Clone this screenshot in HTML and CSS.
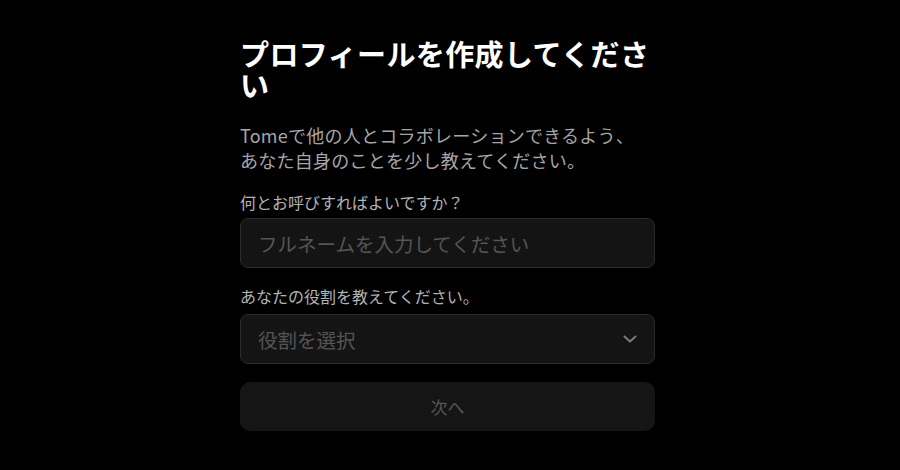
FILE: index.html
```html
<!DOCTYPE html>
<html lang="ja">
<head>
<meta charset="utf-8">
<title>プロフィールを作成してください</title>
<link rel="stylesheet" href="styles.css">
</head>
<body>
<main class="page">
  <form class="card">
    <h1 class="title">プロフィールを作成してください</h1>
    <p class="lead">Tomeで他の人とコラボレーションできるよう、<br>あなた自身のことを少し教えてください。</p>
    <div class="field">
      <label class="label" for="name">何とお呼びすればよいですか？</label>
      <input class="input" id="name" type="text" placeholder="フルネームを入力してください">
    </div>
    <div class="field field-role">
      <label class="label" for="role">あなたの役割を教えてください。</label>
      <div class="select" id="role">
        <span class="select-text">役割を選択</span>
        <svg class="chevron" width="14" height="8" viewBox="0 0 14 8" aria-hidden="true">
          <path d="M1.5 1.5 L7 6.5 L12.5 1.5" fill="none" stroke="#7a7a7a" stroke-width="2" stroke-linecap="round" stroke-linejoin="round"/>
        </svg>
      </div>
    </div>
    <button class="next" type="button">次へ</button>
  </form>
</main>
</body>
</html>
```

FILE: styles.css
```css
html, body {
  margin: 0;
  padding: 0;
  background: #000;
}
body {
  font-family: "Noto Sans CJK JP", "Noto Sans", sans-serif;
  color: #fff;
}
.page {
  display: flex;
  padding: 38px 0 0 240px;
}
.card {
  width: 415px;
  display: flex;
  flex-direction: column;
}
.title {
  margin: 0;
  font-size: 29px;
  line-height: 31px;
  font-weight: 700;
  letter-spacing: 0.4px;
  color: #fff;
}
.lead {
  margin: 23px 0 0;
  font-size: 18px;
  line-height: 25px;
  letter-spacing: 0.25px;
  color: #a6a6a6;
}
.field {
  display: flex;
  flex-direction: column;
  gap: 6px;
  margin-top: 19px;
}
.field-role {
  margin-top: 18px;
  gap: 8px;
}
.label {
  font-size: 16px;
  line-height: 20px;
  color: #b4b4b4;
}
.input, .select {
  box-sizing: border-box;
  height: 50px;
  width: 100%;
  background: #141414;
  border: 1px solid #2b2b2b;
  border-radius: 8px;
  padding: 0 17px;
  font-family: inherit;
  font-size: 19.5px;
  color: #ddd;
  outline: none;
}
.input::placeholder {
  color: #555;
}
.select {
  display: flex;
  align-items: center;
  justify-content: space-between;
  padding-right: 17px;
}
.select-text {
  color: #555;
}
.chevron {
  display: block;
}
.next {
  margin-top: 18px;
  height: 49px;
  border: none;
  border-radius: 10px;
  background: #151515;
  color: #555;
  font-family: inherit;
  font-size: 17px;
}
```
